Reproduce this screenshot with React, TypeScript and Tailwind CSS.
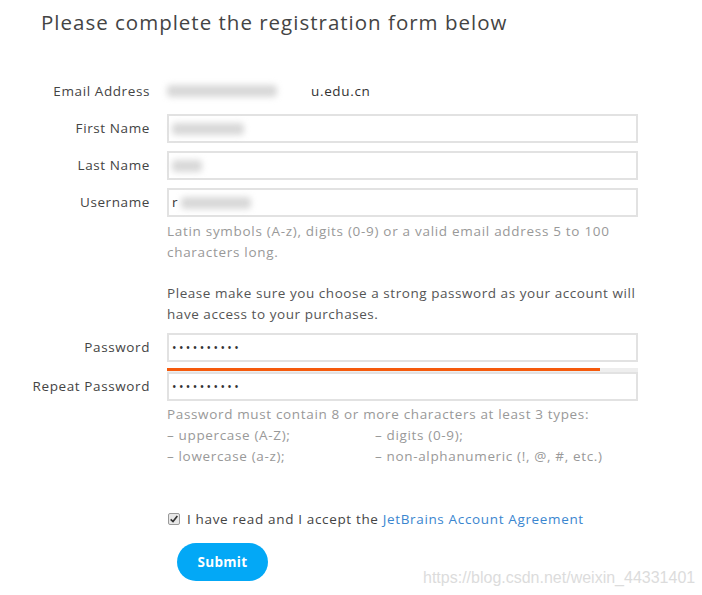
const FONT = "font-['Open_Sans','Liberation_Sans',sans-serif]";

function Label({ children }: { children: React.ReactNode }) {
  return (
    <div className="flex items-center justify-end text-[13.5px] tracking-[0.6px] text-[#444]">
      {children}
    </div>
  );
}

function Box({ children }: { children?: React.ReactNode }) {
  return (
    <div className="flex h-[29px] items-center border-2 border-[#e2e2e2] bg-white px-[3px] text-[13.5px] tracking-[0.65px] text-[#333]">
      {children}
    </div>
  );
}

function Blur({ w }: { w: number }) {
  return (
    <span
      className="inline-block h-[12px] rounded-sm bg-[#d8d8d8] blur-[3px]"
      style={{ width: w }}
    />
  );
}

function Dots() {
  return (
    <span className="text-[12px] tracking-[2.4px] text-[#333]">••••••••••</span>
  );
}

export default function App() {
  return (
    <div className={`min-h-screen bg-white ${FONT}`}>
      <h1 className="pl-[41px] pt-[8px] text-[20.5px] leading-[28px] tracking-[1px] text-[#444]">
        Please complete the registration form below
      </h1>

      <form className="mt-[41px] grid grid-cols-[150px_471px] gap-x-[17px]">
        <Label>Email Address</Label>
        <div className="flex h-[28px] items-center text-[13.5px] tracking-[0.65px] text-[#333]">
          <Blur w={110} />
          <span className="ml-[4px] inline-block h-[20px] w-[30px] rounded-full bg-white" />
          <span>u.edu.cn</span>
        </div>

        <div className="col-span-2 h-[9px]" />
        <Label>First Name</Label>
        <Box>
          <Blur w={72} />
        </Box>

        <div className="col-span-2 h-[8px]" />
        <Label>Last Name</Label>
        <Box>
          <Blur w={30} />
        </Box>

        <div className="col-span-2 h-[8px]" />
        <Label>Username</Label>
        <Box>
          <span className="mr-[3px]">r</span>
          <Blur w={70} />
        </Box>

        <div />
        <div className="pt-[4px] text-[13.5px] leading-[21px] tracking-[0.7px] text-[#999]">
          <p>
            Latin symbols (A-z), digits (0-9) or a valid email address 5 to 100
            characters long.
          </p>
          <p className="mt-[20px] tracking-[0.55px] text-[#555]">
            Please make sure you choose a strong password as your account will
            have access to your purchases.
          </p>
        </div>

        <div className="col-span-2 h-[8px]" />
        <Label>Password</Label>
        <Box>
          <Dots />
        </Box>

        <div />
        <div className="mt-[6px] h-[4px] bg-[#eeeeee]">
          <div className="h-[3px] w-[92%] bg-[#f55a0c]" />
        </div>

        <Label>Repeat Password</Label>
        <Box>
          <Dots />
        </Box>

        <div />
        <div className="pt-[3px] text-[13.5px] leading-[21px] tracking-[0.65px] text-[#999]">
          <p>Password must contain 8 or more characters at least 3 types:</p>
          <div className="grid grid-cols-[208px_1fr]">
            <span>– uppercase (A-Z);</span>
            <span>– digits (0-9);</span>
            <span>– lowercase (a-z);</span>
            <span>– non-alphanumeric (!, @, #, etc.)</span>
          </div>
        </div>

        <div />
        <label className="mt-[42px] flex items-center gap-[7px] text-[13.5px] tracking-[0.65px] text-[#444]">
          <span className="ml-[1px] flex h-[12px] w-[12px] items-center justify-center rounded-[2px] border border-[#9a9a9a] bg-[#e8e8e8]">
            <svg viewBox="0 0 12 12" className="h-[10px] w-[10px]">
              <path d="M2 6.5 L4.8 9 L10 2.5" fill="none" stroke="#333" strokeWidth="2" />
            </svg>
          </span>
          <span>
            I have read and I accept the{" "}
            <a className="text-[#3b86cf]">JetBrains Account Agreement</a>
          </span>
        </label>

        <div />
        <div className="mt-[14px] pl-[10px]">
          <button
            type="button"
            className="h-[38px] w-[91px] rounded-full bg-[#03a8f6] text-[13.5px] font-bold tracking-[0.3px] text-white"
          >
            Submit
          </button>
        </div>
      </form>

      <div className="absolute left-[423px] top-[566px] font-['Liberation_Sans',sans-serif] text-[16px] text-[#dcdcdc]">
        https://blog.csdn.net/weixin_44331401
      </div>
    </div>
  );
}
